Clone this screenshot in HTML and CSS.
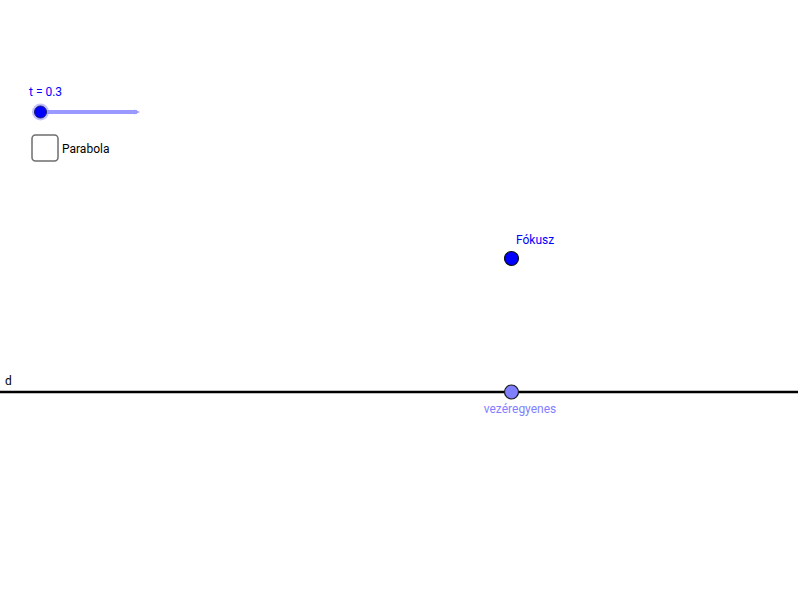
FILE: index.html
```html
<!DOCTYPE html>
<html>
<head>
<meta charset="utf-8">
<link rel="stylesheet" href="styles.css">
</head>
<body>
<div class="canvas">
<svg class="board" width="800" height="600" viewBox="0 0 800 600" xmlns="http://www.w3.org/2000/svg">
  <line class="dir-line" x1="0" y1="392" x2="798" y2="392"/>
  <text class="lbl lbl-black" x="5" y="385">d</text>

  <circle class="pt-line" cx="511.5" cy="392" r="7"/>
  <text class="lbl lbl-light" x="520" y="413" text-anchor="middle">vezéregyenes</text>

  <circle class="pt-focus" cx="511.5" cy="258.5" r="7"/>
  <text class="lbl lbl-blue" x="516" y="244">Fókusz</text>

  <text class="lbl lbl-blue" x="29" y="96">t = 0.3</text>
  <line class="slider-track" x1="40" y1="112" x2="137" y2="112"/>
  <path class="slider-tip" d="M134 109.5 L140 112 L134 114.5 Z"/>
  <circle class="slider-halo" cx="40.5" cy="112" r="8.5"/>
  <circle class="slider-knob" cx="40.5" cy="112" r="6"/>

  <rect class="check" x="32" y="135" width="26" height="26" rx="3.5"/>
  <text class="lbl lbl-black" x="62" y="153">Parabola</text>
</svg>
</div>
</body>
</html>
```
FILE: styles.css
```css
html, body {
  margin: 0;
  padding: 0;
  background: #ffffff;
}
.canvas {
  width: 800px;
  height: 600px;
  overflow: hidden;
}
.board {
  display: block;
}
.lbl {
  font-family: Roboto, "Liberation Sans", sans-serif;
  font-size: 12px;
}
.lbl-black { fill: #000000; }
.lbl-blue { fill: #0000ff; }
.lbl-light { fill: #7f7fff; }
.dir-line {
  stroke: #000000;
  stroke-width: 2.5;
}
.pt-line {
  fill: #7f7fff;
  stroke: #1a1a1a;
  stroke-width: 1.2;
}
.pt-focus {
  fill: #0000ff;
  stroke: #111111;
  stroke-width: 1.2;
}
.slider-track {
  stroke: #9999ff;
  stroke-width: 4;
}
.slider-tip {
  fill: #9999ff;
}
.slider-halo {
  fill: #9999ff;
  fill-opacity: 0.6;
}
.slider-knob {
  fill: #0000ff;
  stroke: #1a1a66;
  stroke-width: 1;
}
.check {
  fill: #ffffff;
  stroke: #6e6e6e;
  stroke-width: 1.5;
}
```
